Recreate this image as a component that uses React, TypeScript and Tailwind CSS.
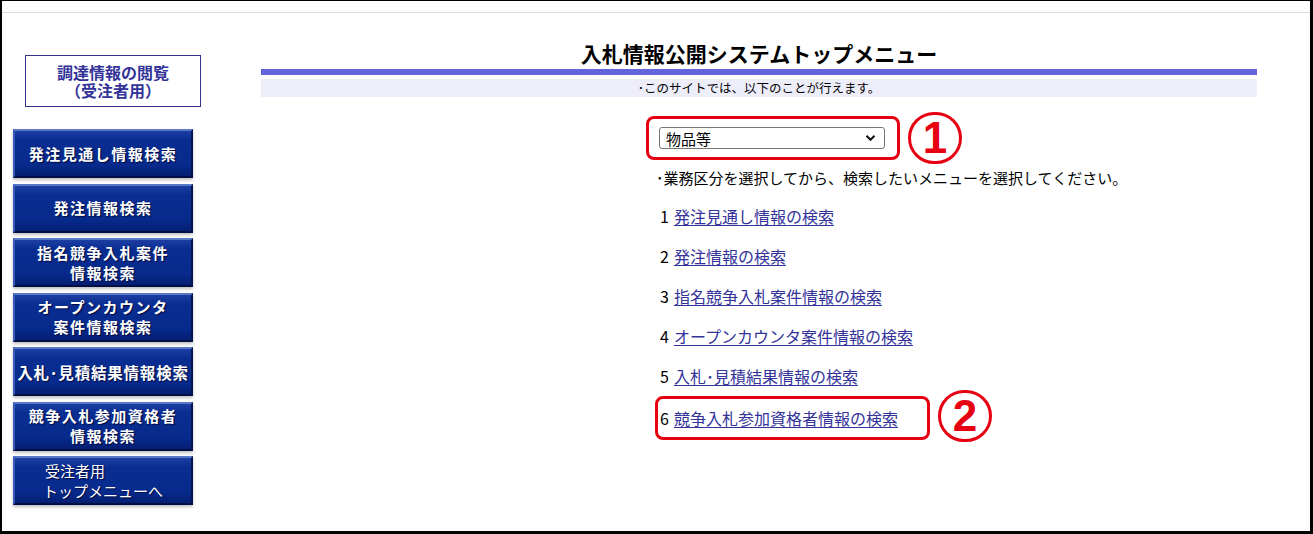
import React from "react";

const btnBase =
  "h-[49px] w-[180px] flex flex-col items-center justify-center text-white font-bold leading-[20px] border-t-2 border-l-2 border-r-2 border-b-2 border-t-[#5a78c8] border-l-[#3a5ab8] border-r-[#021650] border-b-[#010f45] bg-[linear-gradient(180deg,#1d3fa3_0%,#0a2d92_20%,#072a8c_75%,#041e72_100%)] shadow-[0_2px_3px_rgba(0,0,0,0.25)] [text-shadow:1px_1px_1px_#000a40]";

function SideButton({ lines, cls = "", tight = false }: { lines: string[]; cls?: string; tight?: boolean }) {
  return (
    <div className={`${btnBase} ${cls}`}>
      {lines.map((l, i) => (
        <span key={i} className={tight ? "text-[15.5px] tracking-[0.8px]" : "text-[15px] tracking-[1.5px]"}>
          {l}
        </span>
      ))}
    </div>
  );
}

const links = [
  "発注見通し情報の検索",
  "発注情報の検索",
  "指名競争入札案件情報の検索",
  "オープンカウンタ案件情報の検索",
  "入札･見積結果情報の検索",
];

function Circle({ n }: { n: string }) {
  return (
    <div className="w-[54px] h-[52px] rounded-full border-[3px] border-[#e60012] flex items-center justify-center text-[#e60012] font-bold text-[44px] leading-none [font-family:'Liberation_Sans',Arial,sans-serif]">
      {n}
    </div>
  );
}

export default function App() {
  return (
    <div className="w-[1313px] h-[534px] bg-white border-t border-l-2 border-r-[3px] border-b-[3px] border-black [font-family:'Noto_Sans_CJK_JP','Noto_Sans',sans-serif] text-black overflow-hidden">
      <div className="h-[12px] border-b border-[#dcdcdc]" />
      <div className="flex">
        {/* Sidebar */}
        <div className="w-[259px] shrink-0 pl-[11px]">
          <div className="ml-[12px] mt-[42px] w-[176px] h-[52px] border border-[#33338a] flex flex-col items-center justify-center text-[#333399] font-bold text-[16px] leading-[18px]">
            <span>調達情報の閲覧</span>
            <span>（受注者用）</span>
          </div>
          <div className="mt-[22px] flex flex-col gap-[5.5px]">
            <SideButton lines={["発注見通し情報検索"]} />
            <SideButton lines={["発注情報検索"]} />
            <SideButton lines={["指名競争入札案件", "情報検索"]} />
            <SideButton lines={["オープンカウンタ", "案件情報検索"]} />
            <SideButton lines={["入札･見積結果情報検索"]} tight />
            <SideButton lines={["競争入札参加資格者", "情報検索"]} />
            <div className={`${btnBase} !items-start pl-[28px]`}>
              <span className="text-[15px] font-normal pl-[2px]">受注者用</span>
              <span className="text-[15px] font-normal">トップメニューへ</span>
            </div>
          </div>
        </div>

        {/* Main */}
        <div className="w-[996px] shrink-0">
          <div className="mt-[27px] h-[27px] text-center font-bold text-[21px] leading-[27px]">
            入札情報公開システムトップメニュー
          </div>
          <div className="mt-[2px] h-[6px] bg-[#6464dc]" />
          <div className="mt-[4px] h-[18px] bg-[#eeeefb] text-center text-[12.5px] leading-[18px]">
            ･このサイトでは、以下のことが行えます。
          </div>

          <div className="pl-[385px]">
            <div className="mt-[15px] flex items-center">
              <div className="w-[254px] h-[44px] border-[3px] border-[#e60012] rounded-[8px] flex items-center pl-[10px]">
                <div className="w-[226px] h-[22px] border border-[#767676] rounded-[3px] bg-white flex items-center justify-between pl-[6px] pr-[8px]">
                  <span className="text-[15px] leading-none">物品等</span>
                  <svg width="11" height="8" viewBox="0 0 11 8">
                    <path d="M1.5 1.8 L5.5 5.8 L9.5 1.8" fill="none" stroke="#111" strokeWidth="2" />
                  </svg>
                </div>
              </div>
              <div className="ml-[8px]">
                <Circle n="1" />
              </div>
            </div>

            <div className="mt-[4px] pl-[10px] text-[15px] leading-[20px]">
              ･業務区分を選択してから、検索したいメニューを選択してください。
            </div>

            <div className="mt-[8px] pl-[14px] flex flex-col">
              {links.map((l, i) => (
                <div key={i} className="h-[40px] flex items-center text-[16px]">
                  <span>{i + 1}</span>
                  <a href="#" className="ml-[5px] text-[#333399] underline underline-offset-2">
                    {l}
                  </a>
                </div>
              ))}
            </div>
            <div className="flex items-center pl-[9px] -mt-[2px]">
              <div className="w-[275px] h-[44px] border-[3px] border-[#e60012] rounded-[8px] flex items-center pl-[2px] text-[16px]">
                <span>6</span>
                <a href="#" className="ml-[5px] text-[#333399] underline underline-offset-2">
                  競争入札参加資格者情報の検索
                </a>
              </div>
              <div className="ml-[8px] -mt-[4px]">
                <Circle n="2" />
              </div>
            </div>
          </div>
        </div>
      </div>
    </div>
  );
}
